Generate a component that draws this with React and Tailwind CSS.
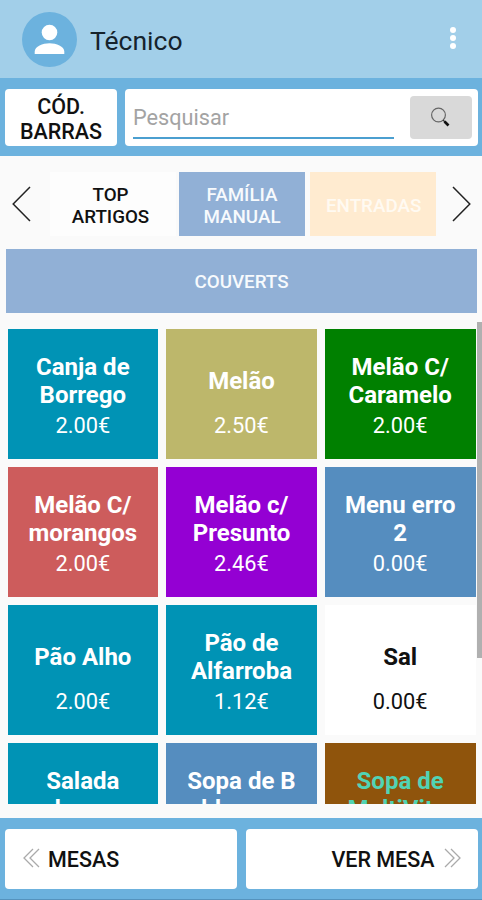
import clsx from "clsx";

const families = [
  { name: "TOP ARTIGOS", className: "bg-[#fdfdfd] text-[#111] pr-[21px]" },
  { name: "FAMÍLIA MANUAL", className: "bg-[#91b0d6] text-[#f7fafd] ml-[3px]" },
  { name: "ENTRADAS", className: "bg-[#ffebd0] text-[#fffaf2] ml-[5px]" },
];

const products = [
  { name: "Canja de Borrego", price: "2.00€", className: "bg-[#0093b5] text-white" },
  { name: "Melão", price: "2.50€", className: "bg-[#bdb76b] text-white" },
  { name: "Melão C/ Caramelo", price: "2.00€", className: "bg-[#008000] text-white" },
  { name: "Melão C/ morangos", price: "2.00€", className: "bg-[#cd5c5c] text-white" },
  { name: "Melão c/ Presunto", price: "2.46€", className: "bg-[#9400d3] text-white" },
  { name: "Menu erro 2", price: "0.00€", className: "bg-[#558dbf] text-white" },
  { name: "Pão Alho", price: "2.00€", className: "bg-[#0093b5] text-white" },
  { name: "Pão de Alfarroba", price: "1.12€", className: "bg-[#0093b5] text-white" },
  { name: "Sal", price: "0.00€", className: "bg-white text-[#111]" },
  { name: "Salada de\u00a0ovo", price: "2.00€", className: "bg-[#0093b5] text-white" },
  { name: "Sopa de B eldroegas", price: "2.00€", className: "bg-[#558dbf] text-white" },
  { name: "Sopa de MultiVita.", price: "2.00€", className: "bg-[#8f540c] text-[#51d3b4]" },
];

const Header = () => (
  <header className="h-[78px] shrink-0 bg-[#a2cfe9] flex items-center pl-[22px] pr-[26px]">
    <svg className="size-[55px]" viewBox="0 0 55 55">
      <circle cx="27.5" cy="27.5" r="27.5" fill="#6cb2de" />
      <circle cx="27.5" cy="20.5" r="7.8" fill="#fff" />
      <path d="M12.7 42v-2.5c0-5.2 8-8.3 14.8-8.3s14.8 3.1 14.8 8.3V42z" fill="#fff" />
    </svg>
    <h1 className="ml-[13px] mt-[4px] text-[26.5px] leading-8 text-[#15232c]">Técnico</h1>
    <button className="ml-auto -mt-[2px]">
      <svg className="w-[6px] h-[24px]" viewBox="0 0 6 24" fill="#fff">
        <circle cx="3" cy="4" r="3" />
        <circle cx="3" cy="12" r="3" />
        <circle cx="3" cy="20" r="3" />
      </svg>
    </button>
  </header>
);

const SearchBar = () => (
  <div className="h-[78px] shrink-0 bg-[#6cb2de] flex gap-2 pl-[5px] pr-1 pt-[11px] pb-[10px]">
    <button className="w-28 rounded-[4px] bg-white px-2 pt-[2px] text-[21.5px] leading-[25px] font-medium text-[#111]">
      CÓD. BARRAS
    </button>
    <div className="flex-1 rounded-[4px] bg-white flex pl-2 pr-[6px] pt-[7px]">
      <div className="w-[261px] h-[43px] border-b-2 border-[#4b9fd0] pt-[8px] text-[21.7px] leading-[28px] text-[#a3a3a3]">
        Pesquisar
      </div>
      <button className="ml-auto w-[62px] h-[43px] rounded-[4px] bg-[#d9d9d9] flex items-center justify-center">
        <svg className="size-5 -mt-[2px] -ml-[2px]" viewBox="0 0 20 20" fill="none">
          <circle cx="8.5" cy="8" r="6.9" stroke="#666" strokeWidth="1.2" />
          <path d="M13 13l2 2" stroke="#333" strokeWidth="1.3" />
          <path d="M14.5 14.5l4 4" stroke="#111" strokeWidth="2.6" />
        </svg>
      </button>
    </div>
  </div>
);

const FamilyTabs = () => (
  <div className="flex items-center h-16 shrink-0 mt-4">
    <button className="w-[50px] pl-3">
      <svg className="w-[19px] h-9" viewBox="0 0 19 36" fill="none" stroke="#222" strokeWidth="1.5">
        <path d="M18 1L1.2 18L18 35" />
      </svg>
    </button>
    {families.map((family) => (
      <button
        key={family.name}
        className={clsx("w-[126px] h-16 px-4 pt-[3px] text-[18.8px] leading-[22px] font-medium", family.className)}
      >
        {family.name}
      </button>
    ))}
    <button className="ml-4">
      <svg className="w-[19px] h-9" viewBox="0 0 19 36" fill="none" stroke="#222" strokeWidth="1.5">
        <path d="M1 1L17.8 18L1 35" />
      </svg>
    </button>
  </div>
);

const ProductCard = ({ product }) => (
  <button className={clsx("h-[129.5px] flex flex-col items-center pt-6", product.className)}>
    <span className="h-14 w-[124px] flex items-center justify-center text-center text-[24px] leading-7 font-bold">
      {product.name}
    </span>
    <span className="mt-[3px] text-[21.8px] leading-7">{product.price}</span>
  </button>
);

// Double chevron used by the footer buttons
const DoubleChevron = ({ className }) => (
  <svg className={clsx("w-[17px] h-5 -mt-[2px]", className)} viewBox="0 0 17 20" fill="none" stroke="#aaa" strokeWidth="1.3">
    <path d="M10 1L1 10l9 9M16 1L7 10l9 9" />
  </svg>
);

const Footer = () => (
  <footer className="h-[82px] shrink-0 bg-[#6cb2de] border-b border-[#5593bd] flex gap-[9px] pl-[5px] pr-[4.5px] pt-[11px] pb-[10.5px] text-[21.5px] font-medium text-[#111]">
    <button className="flex-1 rounded-[4px] bg-white flex items-center pl-[18px]">
      <DoubleChevron />
      <span className="ml-[8px] mt-[2px]">MESAS</span>
    </button>
    <button className="flex-1 rounded-[4px] bg-white flex items-center justify-end pr-[17px]">
      <span className="mr-[9px] mt-[2px]">VER MESA</span>
      <DoubleChevron className="rotate-180" />
    </button>
  </footer>
);

export default function App() {
  return (
    <div className="w-[482px] h-[900px] flex flex-col overflow-hidden bg-[#fafafa] font-[Roboto,sans-serif]">
      <Header />
      <SearchBar />
      <FamilyTabs />
      <button className="mt-[13px] ml-[6px] mr-[5px] h-16 shrink-0 bg-[#91b0d6] pt-[2px] text-[18.8px] font-medium text-[#f7fafd]">
        COUVERTS
      </button>
      <main className="mt-[9px] h-[482px] shrink-0 flex overflow-hidden">
        <div className="w-[477px] shrink-0 pt-[7px] pl-[7.5px] pr-[1.5px] grid grid-cols-3 gap-x-2 gap-y-[8.5px] content-start">
          {products.map((product) => (
            <ProductCard key={product.name} product={product} />
          ))}
        </div>
        <div className="w-[5px] h-[336px] bg-[#b0b0b0]" />
      </main>
      <div className="h-[14px] shrink-0" />
      <Footer />
    </div>
  );
}
